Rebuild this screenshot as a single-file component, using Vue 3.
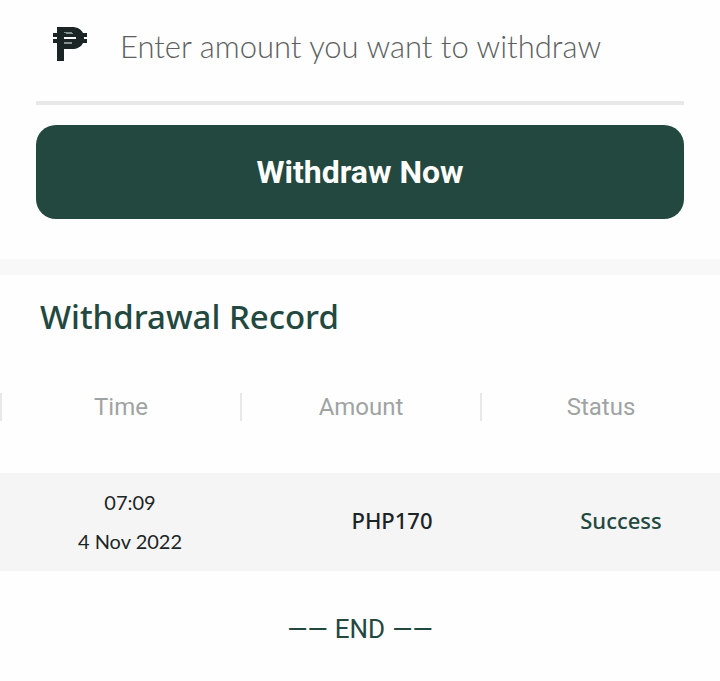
<template>
    <main class="withdraw">
        <form class="withdraw_form" @submit.prevent>
            <div class="amount_field">
                <label class="amount_label" for="amount" aria-label="Amount in pesos">
                    <svg class="amount_icon" viewBox="0 0 36 36" aria-hidden="true">
                        <path
                            fill="#1c2526"
                            fill-rule="evenodd"
                            d="M5 1H20C25 1 29 3 31 7H35V11H32V13H35V17H31C29 21 25 23 20 23H12V35H5V17H1V13H5V11H1V7H5ZM12 11V13H24V11Z"
                        />
                        <path stroke="#829090" stroke-width="1" d="M12 6.500H20M14 7.500H21M12 16.500H20M12 17.500H20" />
                    </svg>
                </label>
                <input
                    id="amount"
                    v-model="amount"
                    class="amount_input"
                    type="text"
                    inputmode="decimal"
                    placeholder="Enter amount you want to withdraw"
                />
            </div>
            <button class="withdraw_btn" type="submit">Withdraw Now</button>
        </form>

        <section class="record">
            <h2 class="record_tit">Withdrawal Record</h2>
            <table class="record_table">
                <thead>
                    <tr>
                        <th v-for="column in columns" :key="column" scope="col">
                            <span class="record_col">{{ column }}</span>
                        </th>
                    </tr>
                </thead>
                <tbody>
                    <tr v-for="record in records" :key="record.date + record.time">
                        <td class="record_time">{{ record.time }}<br />{{ record.date }}</td>
                        <td class="record_amount">{{ record.amount }}</td>
                        <td class="record_status">{{ record.status }}</td>
                    </tr>
                </tbody>
            </table>
            <p class="record_end">
                <span>——</span>
                <span>END</span>
                <span>——</span>
            </p>
        </section>
    </main>
</template>

<script setup>
import { ref } from "vue";

const amount = ref("");
const columns = ["Time", "Amount", "Status"];
const records = [{ time: "07:09", date: "4 Nov 2022", amount: "PHP170", status: "Success" }];
</script>

<style>
body {
    background: #fefefe;
}
</style>

<style scoped>
.withdraw {
    color: #1c2526;
    font-family: "Noto Sans", sans-serif;
}

.withdraw_form {
    padding: 0 36px 40px;
    border-bottom: 16px solid #f8f8f8;
}

.amount_field {
    display: flex;
    align-items: center;
    gap: 32px;
    padding: 16px 16px 24px;
    border-bottom: 4px solid #e8e8e8;
}

.amount_label {
    flex-shrink: 0;
    padding-bottom: 6px;
}

.amount_icon {
    display: block;
    width: 36px;
    height: 36px;
}

.amount_input {
    flex: 1;
    box-sizing: border-box;
    min-width: 0;
    height: 61px;
    padding: 0 0 2px;
    border: 0;
    outline: 0;
    background: transparent;
    color: #1c2526;
    font-family: Lato, sans-serif;
    font-size: 31px;
    font-weight: 300;
}

.amount_input::placeholder {
    color: #5c6060;
    opacity: 1;
}

.withdraw_btn {
    display: block;
    width: 100%;
    margin-top: 20px;
    padding: 27px 16px;
    border: 0;
    border-radius: 20px;
    background: #22483f;
    color: #fff;
    font-family: Roboto, sans-serif;
    font-size: 32px;
    font-weight: 700;
    line-height: 40px;
    cursor: pointer;
}

.record_tit {
    margin: 0;
    padding: 20px 40px 54px;
    color: #22483f;
    font-size: 33px;
    font-weight: 500;
    line-height: 44px;
}

.record_table {
    width: 100%;
    border-collapse: collapse;
    table-layout: fixed;
}

.record_table th {
    padding: 0 0 52px;
}

.record_col {
    display: block;
    border-left: 2px solid #e8e8e8;
    color: #a0a3a3;
    font-family: Roboto, sans-serif;
    font-size: 24px;
    font-weight: 400;
    line-height: 28px;
}

.record_table tbody {
    background: #f5f5f5;
}

.record_table td {
    padding: 8px 0 12px;
    text-align: center;
    font-size: 22px;
    font-weight: 500;
    line-height: 39px;
}

.record_table .record_time {
    padding: 10px 0 10px 20px;
    font-family: Lato, sans-serif;
    font-size: 20px;
    font-weight: 400;
}

.record_table .record_amount {
    padding-left: 64px;
}

.record_table .record_status {
    padding-left: 42px;
    color: #22483f;
}

.record_end {
    display: flex;
    justify-content: center;
    gap: 7px;
    margin: 0;
    padding: 40px 0;
    color: #22483f;
    font-family: Roboto, sans-serif;
    font-size: 26px;
    line-height: 36px;
}
</style>
